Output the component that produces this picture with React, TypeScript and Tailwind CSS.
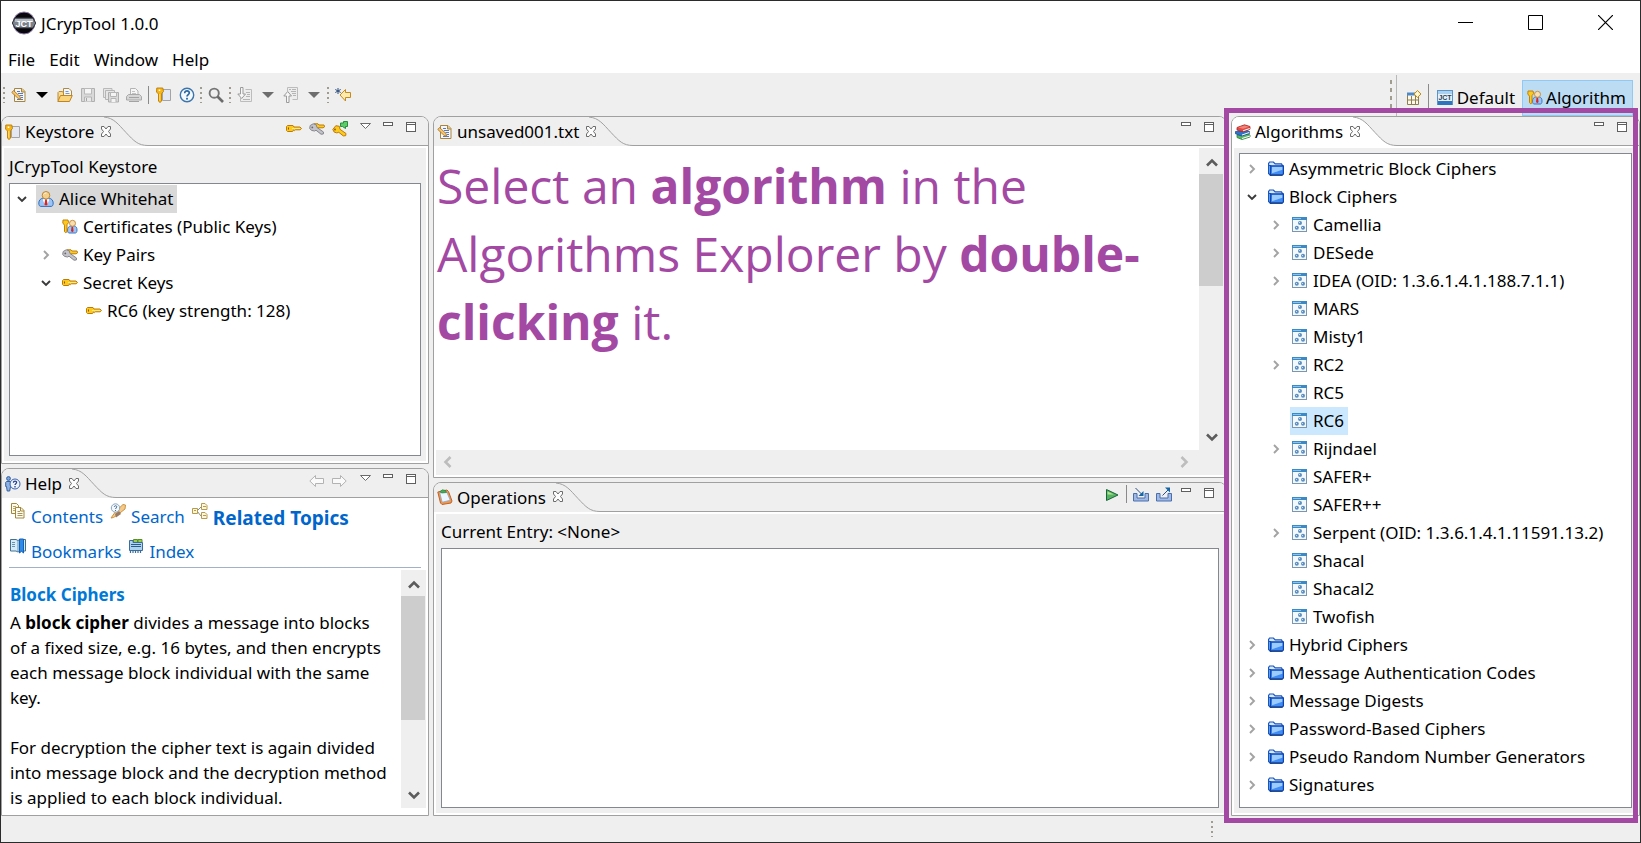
import React from "react";

type P = { children?: React.ReactNode };

/* ---------- icons ---------- */

const Svg = ({ children, size = 16 }: P & { size?: 16 | 10 | 12 }) => (
  <svg width={size} height={size} viewBox={`0 0 ${size} ${size}`} fill="none" className="shrink-0" aria-hidden="true">
    {children}
  </svg>
);

const CloseGlyph = () => (
  <Svg size={12}>
    <path
      d="M1.500 .5h2.500l2 2.500 2-2.500h2.500v2.500l-2 2.500 2 2.500v2.500H8L6 8l-2 2.500H1.500V8l2-2.500-2-2.500z"
      stroke="#6b6b6b"
      fill="#fdfdfd"
    />
  </Svg>
);
const MinGlyph = () => (
  <Svg>
    <rect x="2.500" y="1.500" width="9" height="3" stroke="#5f5f5f" fill="#fff" />
  </Svg>
);
const MaxGlyph = () => (
  <Svg>
    <rect x="2.500" y="1.500" width="9" height="9" stroke="#5f5f5f" fill="#fff" />
    <path d="M2.500 3.500h9" stroke="#5f5f5f" />
  </Svg>
);
const MenuGlyph = () => (
  <Svg>
    <path d="M2.500 2.500h10L7.500 7.500z" stroke="#6b6b6b" fill="#fff" />
  </Svg>
);
const Drop = ({ dark = false }: { dark?: boolean }) => (
  <svg width="12" height="6" viewBox="0 0 12 6" className="shrink-0" aria-hidden="true">
    <path d="M0 0h12L6 6z" fill={dark ? "#000" : "#6d6d6d"} />
  </svg>
);

const EditDoc = () => (
  <Svg>
    <path d="M3.500 1.500h7.500l3 3v10h-10.500z" fill="#f4f8fe" stroke="#a9853c" />
    <path d="M10.500 1.500v3.500h3.500" fill="#e9c877" stroke="#a9853c" />
    <path d="M6 4.500h3M7 6.500h5M8.500 8.500h3.500M10 10.500h2M6 12.500h6" stroke="#5c79b0" />
    <path d="M.8 5.500l1.700-2 6.500 6 .8 2.700-2.600-.7z" fill="#f5c46b" stroke="#a56f21" strokeWidth=".8" />
  </Svg>
);
const OpenFolder = () => (
  <Svg>
    <path d="M6.500 1.500h5.500l2.500 2.500v6h-8z" fill="#f3f8ff" stroke="#b08a3e" />
    <path d="M8.500 4.500h3M8.500 6.500h4" stroke="#7b96c6" />
    <path d="M1 13.500v-8l1-1h3.500l1 1.500v3" fill="#f7dc96" stroke="#bf8a2a" />
    <path d="M.8 14.500l2.700-6h11.800l-2.800 6z" fill="#fbd57c" stroke="#bf8424" />
  </Svg>
);
const Save = () => (
  <Svg>
    <path d="M1.500 1.500h13v13h-13z" fill="#d9d9d9" stroke="#b0b0b0" />
    <path d="M4.500 1.500h7v5.500h-7z" fill="#f5f5f5" stroke="#b9b9b9" />
    <path d="M4.500 14.500v-4.500h7v4.500" fill="#e9e9e9" stroke="#b4b4b4" />
    <path d="M6.500 11v3" stroke="#a5a5a5" />
  </Svg>
);
const SaveAll = () => (
  <Svg>
    <path d="M.5 1.500h8.500v9H.5z" fill="#e6e6e6" stroke="#b9b9b9" />
    <path d="M2.500 3.500h9v9h-9z" fill="#e6e6e6" stroke="#b5b5b5" />
    <path d="M5.500 5.500h10v9.500h-10z" fill="#dadada" stroke="#adadad" />
    <path d="M7.500 5.500h6v4h-6zM8 15v-3.500h5V15" fill="#f4f4f4" stroke="#b5b5b5" />
  </Svg>
);
const Print = () => (
  <Svg>
    <path d="M4.500 7V1.500h5l2.500 2.500v3" fill="#f6f6f6" stroke="#b3b3b3" />
    <path d="M6 4.500h3M6 6.500h4" stroke="#c2c2c2" />
    <path d="M2.500 7.500h11l2 2v3.500h-15v-3.500z" fill="#d5d5d5" stroke="#a9a9a9" />
    <path d="M3 10.500h10M3 14.500h10" stroke="#a3a3a3" />
  </Svg>
);
const KeystoreIcon = () => (
  <Svg>
    <path d="M6.500 2.500h8v11h-8z" fill="#e4e8f3" stroke="#a4a4a4" />
    <path d="M.8 1h6l.7 3.500-2 2.200v7.500l-1.500 1.300-1.500-1.300V7L.5 5z" fill="#f8b614" stroke="#b97b06" strokeWidth=".9" />
    <path d="M3.500 2.500v1.500" stroke="#fff" strokeWidth="1.500" />
    <path d="M3.800 7v6.500" stroke="#ffe27c" />
  </Svg>
);
const HelpIcon = () => (
  <Svg>
    <circle cx="8" cy="8" r="6.700" fill="#f4f9ff" stroke="#3c74ab" strokeWidth="1.400" />
    <path d="M5.700 6.200c0-3.200 4.800-2.800 4.600-.2C10.200 7.600 8 7.600 8 9.600" stroke="#2b669f" strokeWidth="1.700" />
    <rect x="7.100" y="10.800" width="1.800" height="1.800" fill="#2b669f" />
  </Svg>
);
const SearchIcon = () => (
  <Svg>
    <circle cx="6.200" cy="6.200" r="4.600" stroke="#757575" strokeWidth="1.900" />
    <path d="M9.500 9.500l5.500 5.500" stroke="#6b6b6b" strokeWidth="2.700" />
  </Svg>
);
const ImportIcon = () => (
  <Svg>
    <path d="M8.500 2.500h6v12h-11V11" fill="#ededed" stroke="#bcbcbc" />
    <path d="M9 5.500h4M10 7.500h3M9 9.500h4M6 12.500h7" stroke="#b5b5b5" />
    <path d="M3.500.5h2.500V7h2.500L4.700 11.500.8 7h2.700z" fill="#f7f7f7" stroke="#9b9b9b" />
  </Svg>
);
const ExportIcon = () => (
  <Svg>
    <path d="M4.500 4V.5h10v12h-5" fill="#ededed" stroke="#bcbcbc" />
    <path d="M6 2.500h2M9 2.500h4M8 4.500h5M9 6.500h4M10 8.500h3" stroke="#b5b5b5" />
    <path d="M3.500 15.500h2.500V9h2.500L4.700 4.500.8 9h2.700z" fill="#f7f7f7" stroke="#9b9b9b" />
  </Svg>
);
const BackStar = () => (
  <Svg>
    <path d="M15.500 5.500v5H10.500v3.500L5 8l5.500-5.500v3z" fill="#fdeaae" stroke="#c48a1e" />
    <path d="M3 1v6M.3 2.500l5.400 3M5.700 2.500l-5.400 3" stroke="#2c4f7c" />
  </Svg>
);
const GoldKey = () => (
  <Svg>
    <path
      d="M1.500 4.500h5.500l1 1.500h6l1.500 1.500-1.300 1.300H9.500l-1 .8-.9-.6-1 1.500H1.500l-1-1V5.500z"
      fill="#fcc91d"
      stroke="#bd7a0c"
    />
    <path d="M2.500 6.500v2" stroke="#8c5600" />
    <path d="M6 7.500h8" stroke="#ffe985" />
  </Svg>
);
const KeyPair = () => (
  <Svg>
    <path d="M5 2.800h4l1 1.200h5l.6 1.800-1.500 1H8.500L5 6z" fill="#fcc91d" stroke="#bd7a0c" />
    <path d="M1.200 4.500l3-1.700 3 1 .8 2.700 6.500 4.500-.2 2-2.300.2-5-4-1.500.8-3-.6-1.800-2z" fill="#c3c3c9" stroke="#85858c" />
    <circle cx="3.300" cy="6.400" r=".9" fill="#66666b" />
  </Svg>
);
const KeyNew = () => (
  <Svg>
    <path d="M.8 8.500l3-3.800 3.600.6.6 3 6 4.200-.3 2.200-2.400.2-4.500-3.600-2 .6-2.600-.8z" fill="#fcc91d" stroke="#bd7a0c" />
    <circle cx="3" cy="8.500" r=".9" fill="#8c5600" />
    <path d="M8.500 2h3V.5h4v5h-2v2l-3-2h-2z" fill="#5ccb68" stroke="#23903a" />
  </Svg>
);
const Person = () => (
  <Svg>
    <path d="M.8 12c0-3 2.200-4.500 4-4.800h6.400c1.800.3 4 1.800 4 4.800 0 2.600-1 3.400-2 3.400H2.800c-1 0-2-.8-2-3.400z" fill="#9cc4f5" stroke="#2f6fc4" />
    <path d="M5.500 7.500L8 9.500l2.500-2 .5 2L8.500 15h-1L5 9.500z" fill="#fff" />
    <path d="M7.200 8.500h1.600l.8 5L8 15l-1.600-1.500z" fill="#cf2a2a" />
    <circle cx="8" cy="4.300" r="3.800" fill="#f3cf8d" stroke="#bf8732" />
    <path d="M5.500 3.500Q6.500 1.800 8.500 2" stroke="#fff4d8" />
  </Svg>
);
const CertIcon = () => (
  <Svg>
    <path d="M5.500 11c0-2.500 1.500-3.700 3-4h4c1.500.3 2.500 1.500 2.500 4 0 2.300-.8 3-1.500 3H7c-.7 0-1.500-.7-1.500-3z" fill="#9cc4f5" stroke="#3f75c0" />
    <path d="M9.600 7.500h1.400l.6 4.500-1.300 1.300L9 12z" fill="#cf2a2a" />
    <circle cx="10.500" cy="4.300" r="3" fill="#f6dfb4" stroke="#cc8f3c" />
    <path d="M1 1h5l.6 2.500-1.600 2.200v7l-1.200 1-1.300-1V6.200L.8 4z" fill="#fcc91d" stroke="#c27f0a" />
  </Svg>
);
const FolderIcon = () => (
  <Svg>
    <path d="M.6 12.500V2.400l1-1.400h3.800l1.800 1.900h6.300l.9 1.600v3H.6z" fill="#d3eaff" stroke="#1a55bd" strokeWidth="1.200" />
    <path d="M.6 12.500V4.500h2l.6 9.400H2z" fill="#6fb2fb" stroke="#1a55bd" strokeWidth="1.200" />
    <path d="M2.900 4.900h12.500v8l-1 1H2.400z" fill="#3f8df5" stroke="#0f43ab" strokeWidth="1.200" />
    <path d="M4 6h10.300v2.800L4 12.300z" fill="#9ccbff" />
    <path d="M2 14.500h12.500" stroke="#17336b" strokeWidth=".8" />
  </Svg>
);
const AlgoIcon = () => (
  <Svg>
    <rect x=".5" y=".5" width="14" height="14" fill="#f1f8fe" stroke="#7c96ad" />
    <rect x="0" y="0" width="15" height="3" fill="#3b8ac6" />
    <path d="M1 1.500h8" stroke="#8dc3e9" />
    <circle cx="8" cy="6" r="2" fill="#5e8fbf" />
    <circle cx="4.800" cy="10.800" r="2" fill="#5e8fbf" />
    <circle cx="11" cy="10.800" r="2" fill="#5e8fbf" />
    <path d="M7 5.500h1M4 10.500h1M10 10.500h1" stroke="#c6dff3" />
  </Svg>
);
const Books = () => (
  <Svg>
    <path d="M2 11l10-1.500 3 1.500v2l-8 2.500-5-2z" fill="#57b861" stroke="#2c7f3c" strokeWidth=".8" />
    <path d="M7 14.500l8-2.500" stroke="#fff" />
    <path d="M.5 7.500L11 6l3.500 1.500v2L6.500 12l-6-2.200z" fill="#2e72c9" stroke="#1a4e98" strokeWidth=".8" />
    <path d="M7 11l7.300-2.500" stroke="#fff" />
    <path d="M2 3.500L9.500.8 15 2.500v2.700L8 7.800 2 6z" fill="#e5483f" stroke="#a92a26" strokeWidth=".8" />
    <path d="M3 3.500l6.500-2 4.500 1.300-6 2z" fill="#f2857b" />
    <path d="M8 6.800l6.700-2.300" stroke="#fff" />
  </Svg>
);
const HelpView = () => (
  <Svg>
    <circle cx="3.500" cy="2.500" r="1.900" fill="#7fa6dd" stroke="#34609f" />
    <path d="M1.500 5.500h4v5l-.8 4.500H2.200l-.7-4.500H.7V6.300z" fill="#8db2e3" stroke="#34609f" />
    <circle cx="10" cy="8" r="5" fill="#eff5fe" stroke="#3b62ab" />
    <path d="M8.400 6.700c0-2.200 3.400-2 3.200-.2-.1 1.200-1.600 1.200-1.600 2.500M10 10v1.500" stroke="#26408c" strokeWidth="1.300" />
  </Svg>
);
const Contents = () => (
  <Svg>
    <path d="M1.500.5h5l2 2v8h-7z" fill="#fffbe9" stroke="#a3873f" />
    <path d="M3 3.500h3M3 5.500h2M3 7.500h2" stroke="#bba566" />
    <path d="M5.500 4.500h5.500l3 3v7.500h-8.500z" fill="#fffdf2" stroke="#a3873f" />
    <path d="M10.500 4.500v3.500h3.500" stroke="#a3873f" />
    <path d="M7.500 8.500h2.500M7.500 10.500h5M7.500 12.500h5" stroke="#a89057" />
  </Svg>
);
const SearchHelp = () => (
  <Svg>
    <path d="M1 15l5-7 7-6.500 2.500.5-.5 4-7 5.500-4.500 3z" fill="#f5c988" stroke="#cb9342" />
    <path d="M5 11l4-3 2 3-5 3.500z" fill="#9b7a63" />
    <circle cx="5.500" cy="5" r="4.200" fill="#f3f8fd" stroke="#8aa6bd" />
    <path d="M4.300 4c0-1.800 2.700-1.600 2.500-.1C6.700 4.900 5.500 5 5.500 6M5.500 7v1" stroke="#4a6c93" />
  </Svg>
);
const Related = () => (
  <Svg>
    <path d="M5 8l4-4M5 8l4 5" stroke="#8a8a8a" />
    <path d="M.5 5.500h5v5h-5zM9.500.5h3.500l2 2v4h-5.500zM9.500 9.500h3.500l2 2v4h-5.500z" fill="#fff7d8" stroke="#b59b4f" />
    <path d="M2 7.500h2M11 3.500h3M11 12.500h3" stroke="#b59b4f" />
  </Svg>
);
const Bookmark = () => (
  <Svg>
    <path d="M.5 1.500h5.500l2 1 2-1h5.500v11.500H10l-2 1-2-1H.5z" fill="#d4ecfa" stroke="#42708f" />
    <path d="M9.500 1h4v14l-2-1.800-2 1.800z" fill="#2f8bea" stroke="#1660b4" />
    <path d="M2 4.500h3M2 6.500h3M2 8.500h3M8 3v10.500" stroke="#6b93ad" />
  </Svg>
);
const IndexIcon = () => (
  <Svg>
    <path d="M5.500 1.500h4v3h-4zM10 1.500h4v3h-4z" fill="#9ccb4f" stroke="#55902c" />
    <path d="M1.500 2.500H5v2h9.500v8h-13z" fill="#aed3f1" stroke="#3c6c99" />
    <path d="M3 6.500h10M3 8.500h10" stroke="#2d5c8b" />
    <path d="M2.500 12v3M5 12v3M7.500 12v3M10 12v3M12.500 12v3" stroke="#3c6c99" strokeWidth="1.200" />
  </Svg>
);
const Clipboard = () => (
  <Svg>
    <path d="M.8 3L10 1l1.500 1.500 3.500 9.500-1 2-9 1.500L3.500 14z" fill="#ee9a4b" stroke="#c35f26" />
    <path d="M2.800 3.800L9.500 2.500l3.700 8.700-8 2z" fill="#eef6ff" stroke="#7fa3d2" strokeWidth=".7" />
    <path d="M3 2.500L5.500.8l3 .7 1 2L4.500 4z" fill="#48ae55" stroke="#2b7d3a" strokeWidth=".7" />
  </Svg>
);
const Play = () => (
  <Svg>
    <path d="M1.500 2.500L13 8 1.500 13.500z" fill="#56b362" stroke="#17663a" />
    <path d="M2.500 4.500L9 7.500H2.500z" fill="#b5e38f" />
  </Svg>
);
const TrayIn = () => (
  <Svg>
    <path d="M4 6.500H.5v7.500h15V6.500H12v4.500H4z" fill="#9fb9e4" stroke="#4a6fb0" />
    <path d="M2.500 1L9 7.500" stroke="#2c4f86" />
    <path d="M10.500 4v5h-5z" fill="#1365a6" />
  </Svg>
);
const TrayOut = () => (
  <Svg>
    <path d="M4 6.500H.5v7.500h15V6.500H12v4.500H4z" fill="#9fb9e4" stroke="#4a6fb0" />
    <path d="M6.500 8.500L12 3" stroke="#2c4f86" />
    <path d="M9 .5h5v5z" fill="#1365a6" />
  </Svg>
);
const ArrowLeftG = () => (
  <Svg>
    <path d="M.8 8L6.500 2.500v3h8v5h-8v3z" fill="#fafafa" stroke="#b3b3b3" />
  </Svg>
);
const ArrowRightG = () => (
  <Svg>
    <path d="M14.200 8L8.500 2.500v3h-8v5h8v3z" fill="#fafafa" stroke="#b3b3b3" />
  </Svg>
);
const NewPerspective = () => (
  <Svg>
    <path d="M1.500 3.500h11v11h-11z" fill="#fdf9ea" stroke="#8f7f4e" />
    <path d="M1 2.500h8v3H1z" fill="#4f8ac6" />
    <path d="M5.500 6v8.500M9.500 6v8.500M1.500 10h11" stroke="#8f7f4e" />
    <path d="M11.500.5l3.500 3.500-3.500 3.500L8 4z" fill="#fff0b0" stroke="#bd9121" />
    <path d="M11.500 2.500v3M10 4h3" stroke="#fff" />
  </Svg>
);
const JctBox = () => (
  <Svg>
    <rect x=".5" y=".5" width="15" height="14" fill="#a9d0ef" stroke="#5b93c8" />
    <rect x="1" y="11" width="14" height="4" fill="#2f75bd" />
    <rect x="1" y="4" width="14" height="7" fill="#f2f8fd" opacity=".8" />
    <text x="8" y="10" textAnchor="middle" fontSize="7" fontWeight="700" fontFamily="Liberation Sans" fill="#2d3f55">
      JCT
    </text>
  </Svg>
);
const Logo = () => (
  <svg width="24" height="24" viewBox="0 0 24 24" className="shrink-0" aria-hidden="true">
    <circle cx="12" cy="12" r="11" fill="#08080c" stroke="#8d7aa8" strokeWidth="1" />
    <path d="M.3 12l2.700-5h18l2.700 5-2.700 5H3z" fill="#7d838c" stroke="#30333a" />
    <path d="M3 8h18v3H3z" fill="#b4bac2" />
    <text x="12" y="15.500" textAnchor="middle" fontSize="9" fontWeight="700" fontFamily="Liberation Sans" fill="#fff">
      JCT
    </text>
  </svg>
);

const Chevron = ({ dir, faint = false }: { dir: "up" | "down" | "left" | "right"; faint?: boolean }) => {
  const d = {
    up: "M1 8.500L6 3.500l5 5",
    down: "M1 3.500l5 5 5-5",
    left: "M8.500 1l-5 5 5 5",
    right: "M3.500 1l5 5-5 5",
  }[dir];
  return (
    <Svg size={12}>
      <path d={d} stroke={faint ? "#bdbdbd" : "#5c5c5c"} strokeWidth="2.600" />
    </Svg>
  );
};

const Twisty = ({ open }: { open: boolean }) => (
  <Svg size={10}>
    {open ? (
      <path d="M1 3l4 4 4-4" stroke="#3a3a3a" strokeWidth="1.900" />
    ) : (
      <path d="M3 1l4 4-4 4" stroke="#a3a3a3" strokeWidth="1.900" />
    )}
  </Svg>
);

/* ---------- shared parts ---------- */

const IconButton = ({ label, children }: P & { label: string }) => (
  <button type="button" aria-label={label} className="flex h-6 w-[23px] items-center justify-center">
    {children}
  </button>
);

const Handle = () => <span className="mx-[2px] h-4 w-[2px] bg-[repeating-linear-gradient(#a09c90_0_2px,transparent_2px_5px)]" />;

function Folder({
  title,
  icon,
  tools,
  active = false,
  className,
  children,
}: P & { title: string; icon: React.ReactNode; tools?: React.ReactNode; active?: boolean; className: string }) {
  return (
    <section
      aria-label={title}
      className={`flex min-h-0 min-w-0 flex-col overflow-hidden rounded-t-lg border border-[#a0a0a0] bg-white ${className}`}
    >
      <header className="flex h-[29px] shrink-0 bg-[#efefef]">
        <div className={`flex items-center pl-[3px] ${active ? "bg-white" : ""}`}>
          {icon}
          <h2 className="pt-px pr-[6px] pl-1 text-[17px] leading-6">{title}</h2>
          <button type="button" aria-label={`Close ${title}`} className="relative z-10 -mr-2">
            <CloseGlyph />
          </button>
        </div>
        <svg width="44" height="29" viewBox="0 0 44 29" className="shrink-0 bg-[#efefef]" aria-hidden="true">
          <path
            d="M0 0C10 1 14 7 22 15.500S34 28.500 44 28.500V29H0z"
            fill={active ? "#fff" : "#efefef"}
          />
          <path d="M0 0C10 1 14 7 22 15.500S34 28.500 44 28.500" fill="none" stroke="#a0a0a0" />
        </svg>
        <div className="flex flex-1 items-start justify-end border-b border-[#a0a0a0] pr-[5px]">
          {tools}
          <IconButton label="Minimize">
            <MinGlyph />
          </IconButton>
          <IconButton label="Maximize">
            <MaxGlyph />
          </IconButton>
        </div>
      </header>
      <div className="flex min-h-0 flex-1 flex-col p-[2px]">{children}</div>
    </section>
  );
}

type Node = { label: string; level: number; icon: React.ReactNode; open?: boolean; selected?: string };

const Tree = ({ label, nodes }: { label: string; nodes: Node[] }) => (
  <ul role="tree" aria-label={label} className="min-h-0 flex-1 overflow-hidden border border-[#828790] bg-white py-px">
    {nodes.map((n) => (
      <li key={n.label} role="treeitem" aria-expanded={n.open} className="flex h-7 items-center">
        {Array.from({ length: n.level }, (_, i) => (
          <span key={i} className="w-6" />
        ))}
        <span className="mr-[2px] flex w-6 justify-center">{n.open !== undefined && <Twisty open={n.open} />}</span>
        <button
          type="button"
          className={`flex h-7 items-center gap-[5px] pr-1 pl-[2px] text-[17px] whitespace-nowrap ${n.selected ?? ""}`}
        >
          {n.icon}
          {n.label}
        </button>
      </li>
    ))}
  </ul>
);

const VScroll = ({ thumb }: { thumb: string }) => (
  <div className="flex w-[25px] shrink-0 flex-col bg-[#efefef]">
    <button type="button" aria-label="Scroll up" className="flex h-[26px] items-center justify-center pt-1">
      <Chevron dir="up" />
    </button>
    <div className="min-h-0 flex-1">
      <div className={`w-6 bg-[#cdcdcd] ${thumb}`} />
    </div>
    <button type="button" aria-label="Scroll down" className="flex h-[26px] items-center justify-center">
      <Chevron dir="down" />
    </button>
  </div>
);

const HelpLink = ({ icon, children, strong = false }: P & { icon: React.ReactNode; strong?: boolean }) => (
  <a href="#" className="flex gap-[5px] text-[#0066cc]">
    <span className="pt-[3px]">{icon}</span>
    <span className={strong ? "pt-1 text-[19px] leading-7 font-bold" : "pt-[3px] text-[17px] leading-7"}>{children}</span>
  </a>
);

/* ---------- data ---------- */

const keystore: Node[] = [
  { label: "Alice Whitehat", level: 0, icon: <Person />, open: true, selected: "bg-[#d9d9d9]" },
  { label: "Certificates (Public Keys)", level: 1, icon: <CertIcon /> },
  { label: "Key Pairs", level: 1, icon: <KeyPair />, open: false },
  { label: "Secret Keys", level: 1, icon: <GoldKey />, open: true },
  { label: "RC6 (key strength: 128)", level: 2, icon: <GoldKey /> },
];

const folder = (label: string, open = false): Node => ({ label, level: 0, icon: <FolderIcon />, open });
const algo = (label: string, open?: boolean, selected?: string): Node => ({
  label,
  level: 1,
  icon: <AlgoIcon />,
  open,
  selected,
});

const algorithms: Node[] = [
  folder("Asymmetric Block Ciphers"),
  folder("Block Ciphers", true),
  algo("Camellia", false),
  algo("DESede", false),
  algo("IDEA (OID: 1.3.6.1.4.1.188.7.1.1)", false),
  algo("MARS"),
  algo("Misty1"),
  algo("RC2", false),
  algo("RC5"),
  algo("RC6", undefined, "bg-[#cce8ff]"),
  algo("Rijndael", false),
  algo("SAFER+"),
  algo("SAFER++"),
  algo("Serpent (OID: 1.3.6.1.4.1.11591.13.2)", false),
  algo("Shacal"),
  algo("Shacal2"),
  algo("Twofish"),
  folder("Hybrid Ciphers"),
  folder("Message Authentication Codes"),
  folder("Message Digests"),
  folder("Password-Based Ciphers"),
  folder("Pseudo Random Number Generators"),
  folder("Signatures"),
];

/* ---------- page ---------- */

export default function App() {
  return (
    <div className="flex h-screen flex-col overflow-hidden border border-[#2b2b2b] bg-[#efefef] font-['Noto_Sans',sans-serif] text-[17px] leading-6 text-black">
      <header className="flex h-[43px] shrink-0 items-center bg-white pl-[11px]">
        <Logo />
        <h1 className="flex-1 pt-[2px] pl-[5px]">JCrypTool 1.0.0</h1>
        <button type="button" aria-label="Minimize window" className="flex h-full w-[70px] items-center justify-center">
          <svg width="15" height="15" viewBox="0 0 15 15" aria-hidden="true">
            <path d="M0 7.500h15" stroke="#000" />
          </svg>
        </button>
        <button type="button" aria-label="Maximize window" className="flex h-full w-[70px] items-center justify-center">
          <svg width="15" height="15" viewBox="0 0 15 15" fill="none" aria-hidden="true">
            <path d="M.5.5h14v14H.5z" stroke="#000" />
          </svg>
        </button>
        <button type="button" aria-label="Close window" className="flex h-full w-[70px] items-center justify-center">
          <svg width="15" height="15" viewBox="0 0 15 15" aria-hidden="true">
            <path d="M0 0l15 15M15 0L0 15" stroke="#000" strokeWidth="1.200" />
          </svg>
        </button>
      </header>

      <nav aria-label="Main menu" className="flex h-[29px] shrink-0 items-center gap-[14px] bg-white pt-[2px] pl-[7px]">
        <button type="button">File</button>
        <button type="button">Edit</button>
        <button type="button">Window</button>
        <button type="button">Help</button>
      </nav>

      <div className="flex h-[43px] shrink-0 items-center">
        <Handle />
        <IconButton label="New"><EditDoc /></IconButton>
        <IconButton label="New options"><Drop dark /></IconButton>
        <IconButton label="Open"><OpenFolder /></IconButton>
        <IconButton label="Save"><Save /></IconButton>
        <IconButton label="Save all"><SaveAll /></IconButton>
        <IconButton label="Print"><Print /></IconButton>
        <span className="mx-[3px] h-[18px] w-px bg-[#8a8a8a]" />
        <IconButton label="Keystore"><KeystoreIcon /></IconButton>
        <IconButton label="Help contents"><HelpIcon /></IconButton>
        <Handle />
        <IconButton label="Search"><SearchIcon /></IconButton>
        <Handle />
        <IconButton label="Next annotation"><ImportIcon /></IconButton>
        <IconButton label="Next annotation options"><Drop /></IconButton>
        <IconButton label="Previous annotation"><ExportIcon /></IconButton>
        <IconButton label="Previous annotation options"><Drop /></IconButton>
        <Handle />
        <IconButton label="Last edit location"><BackStar /></IconButton>

        <div className="ml-auto flex h-full items-end pr-[7px]">
          <span className="mr-1 mb-2 h-7 w-[2px] bg-[repeating-linear-gradient(#a09c90_0_4px,transparent_4px_8px)]" />
          <span className="mr-[6px] h-[41px] w-px bg-[#b9b9b9]" />
          <div className="flex h-9 items-center">
            <IconButton label="Open perspective"><NewPerspective /></IconButton>
            <span className="mr-2 ml-[2px] h-7 w-px bg-[#8a8a8a]" />
            <button type="button" className="mr-[7px] flex items-center gap-1 pb-px">
              <JctBox />
              <span>Default</span>
            </button>
            <button type="button" className="flex h-9 items-center gap-[3px] border border-[#90c8f6] bg-[#bcdcf4] px-1">
              <CertIcon />
              <span className="pr-[2px]">Algorithm</span>
            </button>
          </div>
        </div>
      </div>

      <main className="grid min-h-0 flex-1 grid-cols-[428fr_794fr_409fr] grid-rows-[minmax(0,1fr)] gap-1">
        <div className="flex min-h-0 min-w-0 flex-col gap-1">
          <Folder
            title="Keystore"
            icon={<KeystoreIcon />}
            className="flex-1"
            tools={
              <>
                <IconButton label="New symmetric key"><GoldKey /></IconButton>
                <IconButton label="New key pair"><KeyPair /></IconButton>
                <IconButton label="Import key"><KeyNew /></IconButton>
                <span className="w-[3px]" />
                <IconButton label="View menu"><MenuGlyph /></IconButton>
              </>
            }
          >
            <div className="flex min-h-0 flex-1 flex-col bg-[#efefef] px-[5px] pb-[5px]">
              <p className="pt-[7px] pb-1">JCrypTool Keystore</p>
              <Tree label="JCrypTool Keystore" nodes={keystore} />
            </div>
          </Folder>

          <Folder
            title="Help"
            icon={<HelpView />}
            className="flex-1"
            tools={
              <>
                <IconButton label="Back"><ArrowLeftG /></IconButton>
                <IconButton label="Forward"><ArrowRightG /></IconButton>
                <span className="w-[3px]" />
                <IconButton label="View menu"><MenuGlyph /></IconButton>
              </>
            }
          >
            <div className="flex min-h-0 flex-1 flex-col pb-[5px]">
              <nav aria-label="Help pages" className="mx-[5px] border-b border-[#a3b1c4] pb-px">
                <div className="flex gap-[7px] pl-px">
                  <HelpLink icon={<Contents />}>Contents</HelpLink>
                  <HelpLink icon={<SearchHelp />}>Search</HelpLink>
                  <HelpLink icon={<Related />} strong>Related Topics</HelpLink>
                </div>
                <div className="flex gap-[7px] pt-[3px] pl-px">
                  <HelpLink icon={<Bookmark />}>Bookmarks</HelpLink>
                  <HelpLink icon={<IndexIcon />}>Index</HelpLink>
                </div>
              </nav>
              <div className="flex min-h-0 flex-1 pt-[2px]">
                <article className="min-w-0 flex-1 overflow-hidden pt-3 pl-[6px] text-[17px] leading-[25px] whitespace-nowrap">
                  <h3 className="pb-[3px] font-bold text-[#0078d7]">Block Ciphers</h3>
                  <p>
                    A <b>block cipher</b> divides a message into blocks
                    <br />
                    of a fixed size, e.g. 16 bytes, and then encrypts
                    <br />
                    each message block individual with the same
                    <br />
                    key.
                  </p>
                  <p className="pt-[25px]">
                    For decryption the cipher text is again divided
                    <br />
                    into message block and the decryption method
                    <br />
                    is applied to each block individual.
                  </p>
                </article>
                <VScroll thumb="h-2/3" />
              </div>
            </div>
          </Folder>
        </div>

        <div className="flex min-h-0 min-w-0 flex-col gap-1">
          <Folder title="unsaved001.txt" icon={<EditDoc />} className="flex-[13]">
            <div className="flex min-h-0 flex-1">
              <div
                role="textbox"
                aria-label="Editor"
                aria-multiline="true"
                className="min-w-0 flex-1 overflow-hidden pt-1 pl-px font-['Open_Sans',sans-serif] text-[48px] leading-[68px] whitespace-nowrap text-[#a349a4]"
              >
                Select an <b>algorithm</b> in the
                <br />
                Algorithms Explorer by <b>double-</b>
                <br />
                <b>clicking</b> it.
              </div>
              <VScroll thumb="h-[45%]" />
            </div>
            <div className="flex h-[25px] shrink-0 items-center justify-between bg-[#efefef] pr-[34px] pl-[6px]">
              <button type="button" aria-label="Scroll left">
                <Chevron dir="left" faint />
              </button>
              <button type="button" aria-label="Scroll right">
                <Chevron dir="right" faint />
              </button>
            </div>
          </Folder>

          <Folder
            title="Operations"
            icon={<Clipboard />}
            className="flex-[12]"
            tools={
              <>
                <IconButton label="Run"><Play /></IconButton>
                <span className="mx-[2px] mt-[2px] h-[18px] w-px bg-[#8a8a8a]" />
                <IconButton label="Import"><TrayIn /></IconButton>
                <IconButton label="Export"><TrayOut /></IconButton>
              </>
            }
          >
            <div className="flex min-h-0 flex-1 flex-col bg-[#efefef] px-[5px] pb-[5px]">
              <p className="pt-[6px] pb-1">Current Entry: &lt;None&gt;</p>
              <div className="min-h-0 flex-1 border border-[#828790] bg-white" />
            </div>
          </Folder>
        </div>

        <div className="relative flex min-h-0 min-w-0 flex-col">
          <Folder title="Algorithms" icon={<Books />} active className="flex-1">
            <div className="flex min-h-0 flex-1 flex-col bg-[#efefef] p-[5px]">
              <Tree label="Algorithms" nodes={algorithms} />
            </div>
          </Folder>
          <div className="pointer-events-none absolute -top-2 right-[2px] -bottom-[7px] -left-[7px] z-20 border-[5px] border-[#a349a4]" />
        </div>
      </main>

      <footer className="flex h-[26px] shrink-0 items-center justify-end pr-[425px]">
        <Handle />
      </footer>
    </div>
  );
}
